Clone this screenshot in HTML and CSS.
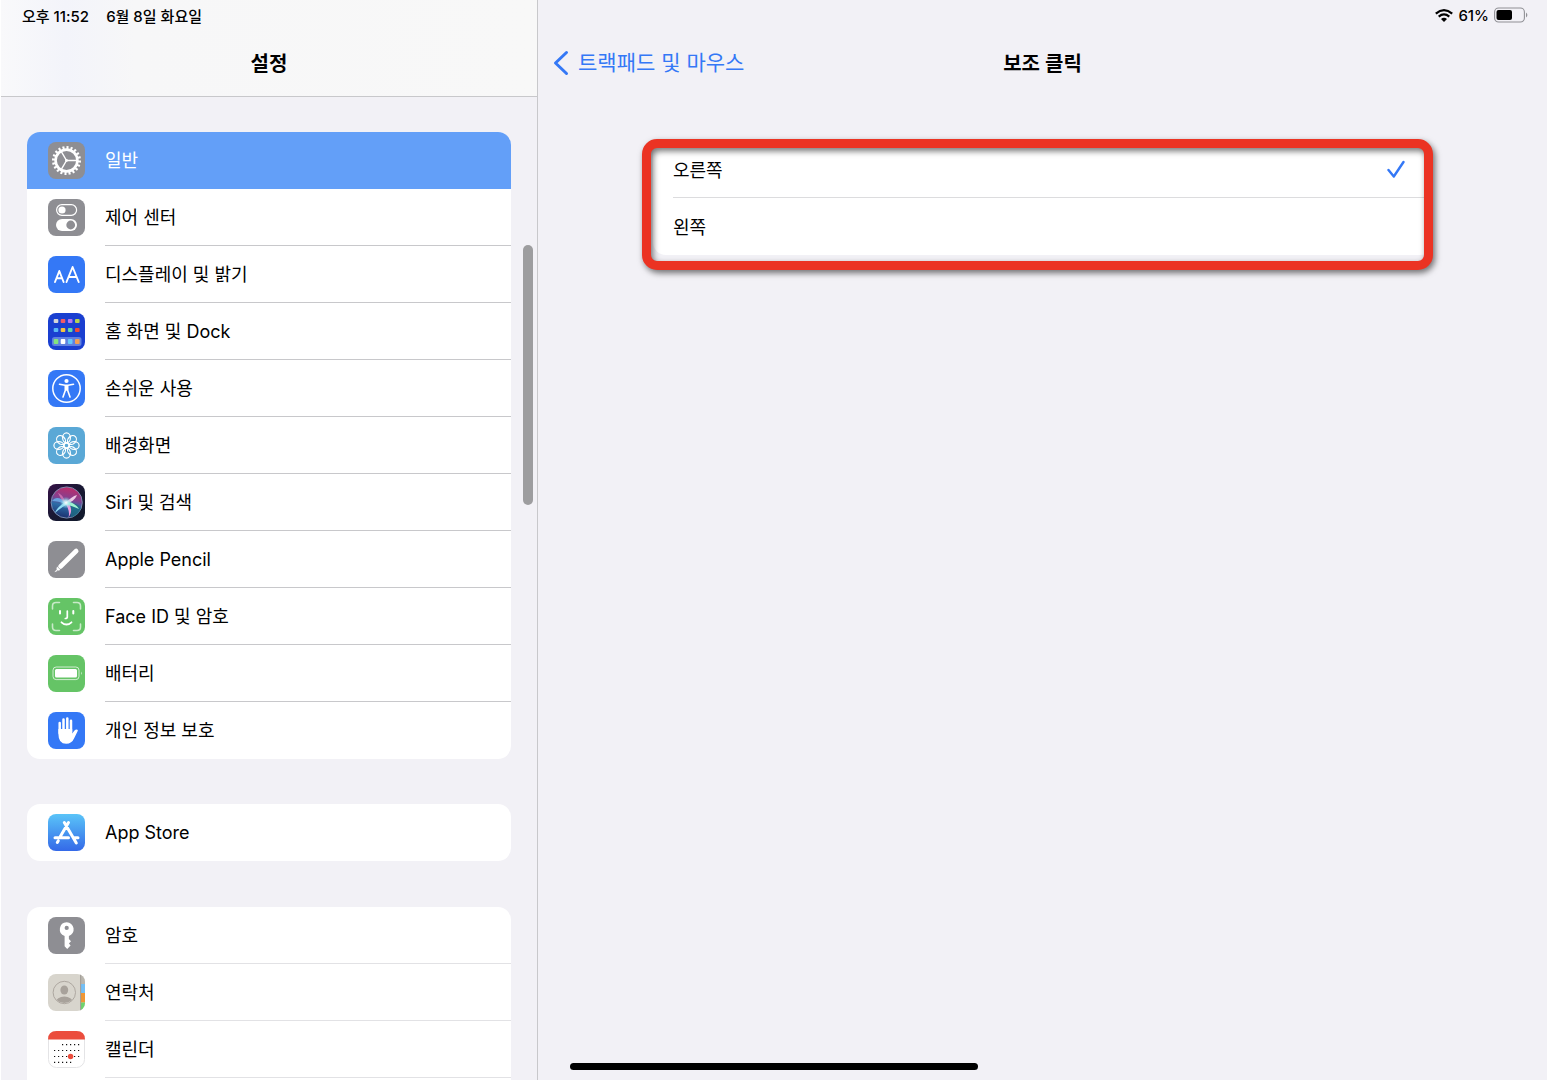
FILE: index.html
```html
<!DOCTYPE html>
<html lang="ko">
  <head>
    <meta charset="UTF-8">
    <meta name="viewport" content="width=device-width, initial-scale=1.0">
    <title>설정</title>
    <link rel="stylesheet" href="styles.css">
  </head>
  <body>
    <aside class="sidebar">
        <header class="sidebar-header">
            <div class="status-bar">
                <span>오후 11:52</span>
                <span>6월 8일 화요일</span>
            </div>
            <h1 class="title">설정</h1>
        </header>

        <nav class="menu">
            <ul class="group">
                <li>
                    <a href="#general" class="row active">
                        <svg class="icon" viewBox="0 0 37 37">
                            <rect width="37" height="37" rx="8" fill="#8e8e93"/>
                            <g fill="none" stroke="#fff">
                                <circle cx="18.5" cy="18.5" r="10.9" stroke-width="2.6"/>
                                <circle cx="18.5" cy="18.5" r="13" stroke-width="3" pathLength="40" stroke-dasharray="1 1"/>
                                <path d="M18.5 18.5H29M18.5 18.5L13.2 9.3M18.5 18.5L13.2 27.7" stroke-width="1.4"/>
                            </g>
                            <circle cx="18.5" cy="18.5" r="1.4" fill="#fff"/>
                        </svg>
                        <span class="label">일반</span>
                    </a>
                </li>
                <li>
                    <a href="#control" class="row">
                        <svg class="icon" viewBox="0 0 37 37">
                            <rect width="37" height="37" rx="8" fill="#8e8e93"/>
                            <rect x="8.6" y="5.7" width="20" height="10.6" rx="5.3" fill="none" stroke="#fff" stroke-width="1.2"/>
                            <circle cx="14" cy="11" r="3.6" fill="#fff"/>
                            <rect x="8" y="20" width="21" height="12" rx="6" fill="#fff"/>
                            <circle cx="22.7" cy="26" r="4.4" fill="#8e8e93"/>
                        </svg>
                        <span class="label">제어 센터</span>
                    </a>
                </li>
                <li>
                    <a href="#display" class="row">
                        <svg class="icon" viewBox="0 0 37 37">
                            <rect width="37" height="37" rx="8" fill="#3478f6"/>
                            <g fill="none" stroke="#fff" stroke-width="1.9" stroke-linecap="round" stroke-linejoin="round">
                                <path d="M7 26L11.3 15L15.6 26M8.5 22.3H14.1"/>
                                <path d="M18.5 26L24.6 11L30.7 26M20.6 21H28.6"/>
                            </g>
                        </svg>
                        <span class="label">디스플레이 및 밝기</span>
                    </a>
                </li>
                <li>
                    <a href="#home" class="row">
                        <svg class="icon" viewBox="0 0 37 37">
                            <rect width="37" height="37" rx="8" fill="#1a3fd0"/>
                            <rect x="4" y="24" width="29.5" height="9" rx="2.5" fill="#5f80e0"/>
                            <rect x="5.7" y="6" width="4.6" height="4" rx="1" fill="#d5d5d8"/>
                            <rect x="12.7" y="6" width="4.6" height="4" rx="1" fill="#f05b66"/>
                            <rect x="19.9" y="6" width="4.6" height="4" rx="1" fill="#b877f0"/>
                            <rect x="27" y="6" width="4.6" height="4" rx="1" fill="#b5d252"/>
                            <rect x="5.7" y="15" width="4.6" height="4" rx="1" fill="#5ab8f5"/>
                            <rect x="12.7" y="15" width="4.6" height="4" rx="1" fill="#f5c33f"/>
                            <rect x="19.9" y="15" width="4.6" height="4" rx="1" fill="#62d6a8"/>
                            <rect x="27" y="15" width="4.6" height="4" rx="1" fill="#ee4b38"/>
                            <rect x="5.7" y="26" width="4.6" height="5" rx="1" fill="#84e57c"/>
                            <rect x="12.7" y="26" width="4.6" height="5" rx="1" fill="#fff"/>
                            <rect x="19.9" y="26" width="4.6" height="5" rx="1" fill="#64c8fa"/>
                            <rect x="27" y="26" width="4.6" height="5" rx="1" fill="#f2a052"/>
                        </svg>
                        <span class="label">홈 화면 및 Dock</span>
                    </a>
                </li>
                <li>
                    <a href="#accessibility" class="row">
                        <svg class="icon" viewBox="0 0 37 37">
                            <rect width="37" height="37" rx="8" fill="#3478f6"/>
                            <circle cx="18.5" cy="18.5" r="13.7" fill="none" stroke="#fff" stroke-width="1.5"/>
                            <circle cx="18.5" cy="11" r="2.1" fill="#fff"/>
                            <path d="M11.5 14.3L17 15.2H20L25.5 14.3M18.5 15.5V20M17.3 16V20.5L15 27M19.7 16V20.5L22 27" fill="none" stroke="#fff" stroke-width="1.6" stroke-linecap="round" stroke-linejoin="round"/>
                        </svg>
                        <span class="label">손쉬운 사용</span>
                    </a>
                </li>
                <li>
                    <a href="#wallpaper" class="row">
                        <svg class="icon" viewBox="0 0 37 37">
                            <rect width="37" height="37" rx="8" fill="#5aa8d6"/>
                            <g fill="none" stroke="#fff" stroke-width="1.2">
                                <ellipse id="petal" cx="18.5" cy="10.8" rx="3.9" ry="4.9"/>
                                <use href="#petal" transform="rotate(45 18.5 18.5)"/>
                                <use href="#petal" transform="rotate(90 18.5 18.5)"/>
                                <use href="#petal" transform="rotate(135 18.5 18.5)"/>
                                <use href="#petal" transform="rotate(180 18.5 18.5)"/>
                                <use href="#petal" transform="rotate(225 18.5 18.5)"/>
                                <use href="#petal" transform="rotate(270 18.5 18.5)"/>
                                <use href="#petal" transform="rotate(315 18.5 18.5)"/>
                                <circle cx="18.5" cy="18.5" r="2.4"/>
                            </g>
                        </svg>
                        <span class="label">배경화면</span>
                    </a>
                </li>
                <li>
                    <a href="#siri" class="row">
                        <svg class="icon" viewBox="0 0 37 37">
                            <defs>
                                <linearGradient id="siri-bg" x2="1" y2="1">
                                    <stop offset="0" stop-color="#351247"/>
                                    <stop offset=".5" stop-color="#191833"/>
                                    <stop offset="1" stop-color="#101a2b"/>
                                </linearGradient>
                                <linearGradient id="siri-orb" x1=".6" y1="0" x2=".4" y2="1">
                                    <stop offset="0" stop-color="#c02b69"/>
                                    <stop offset=".38" stop-color="#84408f"/>
                                    <stop offset=".6" stop-color="#2c6da8"/>
                                    <stop offset="1" stop-color="#1c2f6e"/>
                                </linearGradient>
                                <radialGradient id="siri-glow">
                                    <stop offset="0" stop-color="#fff"/>
                                    <stop offset=".4" stop-color="#bdeef5" stop-opacity=".8"/>
                                    <stop offset="1" stop-color="#6fc8e0" stop-opacity="0"/>
                                </radialGradient>
                            </defs>
                            <rect width="37" height="37" rx="8" fill="url(#siri-bg)"/>
                            <circle cx="18.7" cy="18.5" r="15.6" fill="url(#siri-orb)" stroke="#8194b8" stroke-width=".9"/>
                            <path d="M18 18C25 19 31 20 33 24C31 30 27 33 23 33C23 27 21 22 18 18Z" fill="#1d6d80" opacity=".7"/>
                            <path d="M17 17C11 13 7 13 4 17C8 17 13 18 17 20Z" fill="#6db5f0" opacity=".8"/>
                            <path d="M17 18C12 22 8 25 7 29C11 25 15 23 19 20Z" fill="#8fdcf5"/>
                            <path d="M18 18C22 15 25 12 29 11C27 16 23 18 19 20Z" fill="#f0c8e4"/>
                            <path d="M17 18C20 24 22 28 20.5 33.5C25 27 23 22 19.5 17.5Z" fill="#ef9ade"/>
                            <path d="M19 17.5C25 18.5 28.5 21 31 25C26 22.5 22 21.5 18 20.5Z" fill="#9ff5d0"/>
                            <path d="M17 18C16 13 13 10 10 9C12 12 13 16 17 19Z" fill="#d878b8" opacity=".8"/>
                            <circle cx="18" cy="18.7" r="6" fill="url(#siri-glow)"/>
                        </svg>
                        <span class="label">Siri 및 검색</span>
                    </a>
                </li>
                <li>
                    <a href="#pencil" class="row">
                        <svg class="icon" viewBox="0 0 37 37">
                            <rect width="37" height="37" rx="8" fill="#8e8e93"/>
                            <path d="M12.5 25.5L28.2 10" stroke="#fff" stroke-width="4.6" stroke-linecap="round"/>
                            <path d="M9 25.5L12.5 29L9.8 29.7L8.4 28.3Z" fill="#fff"/>
                            <path d="M8.3 28.7L9.5 29.9L6.4 31.2Z" fill="#fff"/>
                        </svg>
                        <span class="label">Apple Pencil</span>
                    </a>
                </li>
                <li>
                    <a href="#faceid" class="row">
                        <svg class="icon" viewBox="0 0 37 37">
                            <rect width="37" height="37" rx="8" fill="#65c466"/>
                            <g fill="none" stroke="#fff" stroke-linecap="round">
                                <path d="M4.5 11V8Q4.5 4.5 8 4.5H11.5M25.5 4.5H29Q32.5 4.5 32.5 8V11M32.5 26V29Q32.5 32.5 29 32.5H25.5M11.5 32.5H8Q4.5 32.5 4.5 29V26" stroke-width="1.6" opacity=".65"/>
                                <path d="M12 13V15.5M25.3 13V15.5" stroke-width="2"/>
                                <path d="M19.3 13V19Q19.3 20.5 17.3 20.5" stroke-width="1.7"/>
                                <path d="M13.5 24.3Q18.5 28.8 23.5 24.3" stroke-width="1.8"/>
                            </g>
                        </svg>
                        <span class="label">Face ID 및 암호</span>
                    </a>
                </li>
                <li>
                    <a href="#battery" class="row">
                        <svg class="icon" viewBox="0 0 37 37">
                            <rect width="37" height="37" rx="8" fill="#65c466"/>
                            <rect x="5" y="12" width="26" height="12.6" rx="3.2" fill="none" stroke="#fff" stroke-width="1" opacity=".7"/>
                            <rect x="7" y="14" width="22" height="8.6" rx="1.5" fill="#fff"/>
                            <path d="M33 16.5Q34.8 18.3 33 20.1Z" fill="#fff" opacity=".7"/>
                        </svg>
                        <span class="label">배터리</span>
                    </a>
                </li>
                <li>
                    <a href="#privacy" class="row">
                        <svg class="icon" viewBox="0 0 37 37">
                            <rect width="37" height="37" rx="8" fill="#3478f6"/>
                            <g stroke="#fff" stroke-linecap="round">
                                <path d="M11.7 21V11M15.5 19V7.6M19.3 19V6.6M23 20V8.8" stroke-width="2.5"/>
                            </g>
                            <path d="M10.4 17H24.2V21.5L26.5 18.5Q28 16.8 29.5 17.7Q30.2 18.2 29.6 19.2L26.3 26Q23.8 31.8 18.2 31.8Q10.4 31.8 10.4 22Z" fill="#fff"/>
                        </svg>
                        <span class="label">개인 정보 보호</span>
                    </a>
                </li>
            </ul>

            <ul class="group">
                <li>
                    <a href="#appstore" class="row">
                        <svg class="icon" viewBox="0 0 37 37">
                            <defs>
                                <linearGradient id="store-bg" x2="0" y2="1">
                                    <stop offset="0" stop-color="#5ac4f8"/>
                                    <stop offset="1" stop-color="#3469e8"/>
                                </linearGradient>
                            </defs>
                            <rect width="37" height="37" rx="8" fill="url(#store-bg)"/>
                            <g stroke="#fff" stroke-width="3" stroke-linecap="round">
                                <path d="M20.5 8.5L12.3 22.5M16.3 8.5L28.3 29M7 23.7H20.5M26.5 23.7H30M10.3 26.8L9.3 28.5"/>
                            </g>
                        </svg>
                        <span class="label">App Store</span>
                    </a>
                </li>
            </ul>

            <ul class="group group-more">
                <li>
                    <a href="#passwords" class="row">
                        <svg class="icon" viewBox="0 0 37 37">
                            <rect width="37" height="37" rx="8" fill="#8e8e93"/>
                            <path fill-rule="evenodd" d="M18.7 5.2A7.1 7.1 0 0 0 16.6 19V29.3L19.2 32L22.6 28.6L20.9 26.6L23 24.3L20.9 22V19A7.1 7.1 0 0 0 18.7 5.2ZM18.7 8.8A2.1 2.1 0 1 1 18.7 13A2.1 2.1 0 0 1 18.7 8.8Z" fill="#fff"/>
                        </svg>
                        <span class="label">암호</span>
                    </a>
                </li>
                <li>
                    <a href="#contacts" class="row">
                        <svg class="icon" viewBox="0 0 37 37">
                            <defs>
                                <clipPath id="contact-tile"><rect width="37" height="37" rx="8"/></clipPath>
                                <clipPath id="contact-face"><circle cx="16.3" cy="18.5" r="10.6"/></clipPath>
                            </defs>
                            <g clip-path="url(#contact-tile)">
                                <path fill="#d8d5cd" d="M0 0H37V37H0Z"/>
                                <path fill="#b9b6ae" d="M33 0H37V10H33Z"/>
                                <path fill="#74bff5" d="M33 10H37V19H33Z"/>
                                <path fill="#ef9736" d="M33 19H37V28.5H33Z"/>
                                <path fill="#6fd36e" d="M33 28.5H37V37H33Z"/>
                                <path d="M32.6 0V37" stroke="#908d87" stroke-width=".8"/>
                            </g>
                            <g clip-path="url(#contact-face)" fill="#a8a29b">
                                <ellipse cx="16.3" cy="16" rx="3.9" ry="4.6"/>
                                <ellipse cx="16.3" cy="28" rx="8.5" ry="5.4"/>
                            </g>
                            <circle cx="16.3" cy="18.5" r="11.2" fill="none" stroke="#a8a29b" stroke-width=".9"/>
                        </svg>
                        <span class="label">연락처</span>
                    </a>
                </li>
                <li>
                    <a href="#calendar" class="row">
                        <svg class="icon" viewBox="0 0 37 37">
                            <rect x=".5" y=".5" width="36" height="36" rx="8" fill="#fff" stroke="#e4e4e6"/>
                            <path d="M0 8.5Q0 0 8.5 0H28.5Q37 0 37 8.5Z" fill="#eb4d3d"/>
                            <g stroke="#111" stroke-width="1.2" stroke-dasharray="1.2 2.8">
                                <path d="M14 13.7H32M6 19.5H32M6 25.5H32M6 31.3H23.5"/>
                            </g>
                            <circle cx="22.6" cy="25.5" r="2.7" fill="#eb4d3d"/>
                        </svg>
                        <span class="label">캘린더</span>
                    </a>
                </li>
            </ul>
        </nav>
        <div class="scroll-thumb"></div>
    </aside>

    <main class="detail">
        <div class="status-bar status-right">
            <svg width="18" height="13" viewBox="0 0 18 13">
                <g fill="none" stroke="#000" stroke-width="2.2">
                    <path d="M.8 4.6Q9 -2.2 17.2 4.6"/>
                    <path d="M3.7 7.6Q9 3.3 14.3 7.6"/>
                </g>
                <path d="M6 10Q9 7.6 12 10L9 13Z"/>
            </svg>
            <span>61%</span>
            <svg width="34" height="16" viewBox="0 0 34 16">
                <rect x=".6" y="1" width="29.8" height="14" rx="4" fill="none" stroke="#8f8f94" stroke-width="1.1"/>
                <rect x="2.5" y="3" width="15.5" height="10" rx="2" fill="#000"/>
                <path d="M32 5.5Q34.8 8 32 10.5Z" fill="#8f8f94"/>
            </svg>
        </div>

        <header class="detail-header">
            <a href="#trackpad" class="back">
                <svg width="16" height="26" viewBox="0 0 16 26">
                    <path d="M13.5 2.5L2.5 13L13.5 23.5" fill="none" stroke="#3478f6" stroke-width="3" stroke-linecap="round" stroke-linejoin="round"/>
                </svg>
                트랙패드 및 마우스
            </a>
            <h2 class="title">보조 클릭</h2>
        </header>

        <form class="options">
            <label class="option">
                <input type="radio" name="secondary-click" value="right" checked>
                <span class="option-label">오른쪽
                    <svg class="check" width="18" height="18" viewBox="0 0 18 18">
                        <path d="M1.5 10L6.8 16.5L16.5 2" fill="none" stroke="#3478f6" stroke-width="2.4" stroke-linecap="round" stroke-linejoin="round"/>
                    </svg>
                </span>
            </label>
            <label class="option">
                <input type="radio" name="secondary-click" value="left">
                <span class="option-label">왼쪽
                    <svg class="check" width="18" height="18" viewBox="0 0 18 18">
                        <path d="M1.5 10L6.8 16.5L16.5 2" fill="none" stroke="#3478f6" stroke-width="2.4" stroke-linecap="round" stroke-linejoin="round"/>
                    </svg>
                </span>
            </label>
            <div class="highlight"></div>
        </form>
    </main>

    <div class="home-indicator"></div>
  </body>
</html>
```
FILE: styles.css
```css
:root {
    --blue: #3478f6;
    --blue-active: #639ff8;
    --bg: #f2f1f6;
    --card: #fff;
    --separator: #c8c8cb;
    --separator-light: #e2e2e5;
    --red: #eb3323;
}

* {
    box-sizing: border-box;
}

body {
    font-family: Inter, 'Noto Sans CJK KR', sans-serif;
    font-size: 18px;
    margin: 0;
    padding: 0 1px;
    height: 100vh;
    overflow: hidden;
    background: #fff;
    color: #000;
    display: grid;
    grid-template-columns: 537fr 1009fr;
    grid-template-rows: 100vh;
}

.sidebar {
    position: relative;
    display: flex;
    flex-direction: column;
    background: var(--bg);
    border-right: 1px solid var(--separator);
}

.sidebar-header {
    flex: none;
    background: linear-gradient(90deg, #f9f9fb 0%, #f3f4fa 12%, #f7f7f8 25%, #f8f8f8 100%);
    border-bottom: 1px solid var(--separator);
}

.status-bar {
    display: flex;
    align-items: center;
    gap: 17px;
    height: 30px;
    padding: 0 21px;
    font-size: 15px;
    font-weight: 500;
}

.status-right {
    justify-content: flex-end;
    gap: 5px;
    padding: 0 19px;
}

.title {
    margin: 0;
    height: 66px;
    font-size: 20px;
    font-weight: 600;
    line-height: 68px;
    text-align: center;
}

.menu {
    flex: 1;
    min-height: 0;
    overflow-y: auto;
    scrollbar-width: none;
    display: flex;
    flex-direction: column;
    gap: 45px;
    padding: 35px 26px 0;
}

.group {
    flex: none;
    list-style: none;
    margin: 0;
    padding: 0;
    background: var(--card);
    border-radius: 13px;
    overflow: hidden;
}

.group-more {
    margin-top: 1px;
    padding-bottom: 20px;
}

.row {
    display: flex;
    align-items: center;
    gap: 20px;
    height: 57px;
    padding-left: 21px;
    color: inherit;
    text-decoration: none;
}

.row.active {
    background: var(--blue-active);
    color: #fff;
}

.icon {
    flex: none;
    width: 37px;
    height: 37px;
}

.label {
    flex: 1;
    height: 57px;
    line-height: 58px;
    border-bottom: 1px solid var(--separator);
}

.group-more .label {
    border-color: var(--separator-light);
}

.row.active .label,
.group:not(.group-more) li:last-child .label {
    border-color: transparent;
}

.scroll-thumb {
    position: absolute;
    top: 245px;
    right: 4px;
    width: 10px;
    height: 260px;
    border-radius: 5px;
    background: #9d9d9f;
}

.detail {
    background: var(--bg);
}

.detail-header {
    display: grid;
    grid-template-columns: 1fr auto 1fr;
    align-items: center;
    padding: 0 15px;
}

.back {
    display: flex;
    align-items: center;
    gap: 9px;
    color: var(--blue);
    font-size: 21px;
    line-height: 26px;
    text-decoration: none;
}

.options {
    position: relative;
    margin: 45px 114px 0 115px;
    background: var(--card);
    border-radius: 13px;
}

.option {
    display: block;
    padding-left: 20px;
}

.option input {
    position: absolute;
    opacity: 0;
}

.option-label {
    display: flex;
    align-items: center;
    justify-content: space-between;
    height: 57px;
    padding-right: 28px;
    border-bottom: 1px solid #dcdcde;
}

.option:nth-child(2) .option-label {
    border-color: transparent;
}

.check {
    visibility: hidden;
}

input:checked + .option-label .check {
    visibility: visible;
}

/* red marker around the choices */
.highlight {
    position: absolute;
    inset: -2px 0 -15px -11px;
    border: 9px solid var(--red);
    border-radius: 15px;
    filter: drop-shadow(2px 3px 3px rgba(0, 0, 0, 0.55));
    pointer-events: none;
}

.home-indicator {
    position: fixed;
    left: 50%;
    bottom: 10px;
    width: 408px;
    height: 7px;
    border-radius: 4px;
    background: #000;
    transform: translateX(-50%);
}
```
